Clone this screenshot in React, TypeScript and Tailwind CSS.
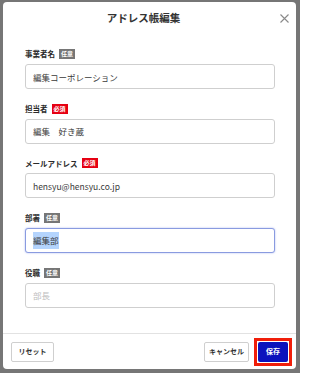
function Badge({ kind }: { kind: "optional" | "required" }) {
  return (
    <span
      className={
        "ml-[4px] inline-flex h-[10px] items-center px-[2px] text-[6px] font-bold leading-none text-white " +
        (kind === "required" ? "bg-[#e60012]" : "bg-[#767676]")
      }
    >
      {kind === "required" ? "必須" : "任意"}
    </span>
  );
}

function Field({
  label,
  kind,
  children,
}: {
  label: string;
  kind: "optional" | "required";
  children: React.ReactNode;
}) {
  return (
    <div className="flex flex-col">
      <div className="flex h-[12px] items-center text-[7.5px] font-bold text-[#2a2a2a]">
        {label}
        <Badge kind={kind} />
      </div>
      <div className="mt-[4px]">{children}</div>
    </div>
  );
}

const inputCls =
  "block h-[25px] w-full rounded-[3px] border border-[#cfcfcf] bg-white px-[7px] text-[8.5px] text-[#3a3a3a] outline-none placeholder:text-[#bdbdbd]";

export default function App() {
  return (
    <div className="flex h-[373px] w-[300px] bg-[#767676] pb-[4px] pl-[3px] pr-[4px] pt-[2px] font-['Noto_Sans_CJK_JP','Noto_Sans',sans-serif]">
      <div className="flex flex-1 flex-col rounded-[4px] bg-white">
        {/* header */}
        <div className="relative flex h-[32px] items-center justify-center pr-[12px]">
          <h1 className="text-[10.5px] font-bold text-[#333]">アドレス帳編集</h1>
          <button className="absolute right-[7px] top-[12px] h-[9px] w-[9px]">
            <svg viewBox="0 0 9 9" className="h-[9px] w-[9px]">
              <path d="M0.5 0.5 L8.5 8.5 M8.5 0.5 L0.5 8.5" stroke="#8a8a8a" strokeWidth="1.1" />
            </svg>
          </button>
        </div>

        {/* body */}
        <div className="flex flex-1 flex-col gap-[13.7px] pl-[22px] pr-[21px] pt-[14px]">
          <Field label="事業者名" kind="optional">
            <input className={inputCls} defaultValue="編集コーポレーション" readOnly />
          </Field>
          <Field label="担当者" kind="required">
            <input className={inputCls} defaultValue="編集　好き蔵" readOnly />
          </Field>
          <Field label="メールアドレス" kind="required">
            <input className={inputCls} defaultValue="hensyu@hensyu.co.jp" readOnly />
          </Field>
          <Field label="部署" kind="optional">
            <div className="flex h-[25px] w-full items-center rounded-[3px] border border-[#8a9be0] bg-white px-[7px] text-[8.5px] text-[#3a3a3a] shadow-[0_0_2px_#a9b6ef]">
              <span className="bg-[#b4d4fd] leading-[17px]">編集部</span>
            </div>
          </Field>
          <Field label="役職" kind="optional">
            <input className={inputCls} placeholder="部長" readOnly />
          </Field>
        </div>

        {/* footer */}
        <div className="flex h-[36px] items-center border-t border-[#e2e2e2] px-[8px]">
          <button className="h-[20px] w-[43px] rounded-[2px] border border-[#cfcfcf] bg-white text-[7px] font-bold text-[#333]">
            リセット
          </button>
          <div className="ml-auto flex items-center gap-[9px]">
            <button className="h-[20px] w-[45px] rounded-[2px] border border-[#cfcfcf] bg-white text-[7px] font-bold text-[#333]">
              キャンセル
            </button>
            <button className="relative h-[20px] w-[30px] rounded-[2px] bg-[#0c12bd] text-[7px] font-bold text-white">
              保存
              <span className="pointer-events-none absolute -inset-[4px] border-[3px] border-[#f01e0a]" />
              <span className="pointer-events-none absolute -inset-[1px] border border-white" />
            </button>
          </div>
        </div>
      </div>
    </div>
  );
}
